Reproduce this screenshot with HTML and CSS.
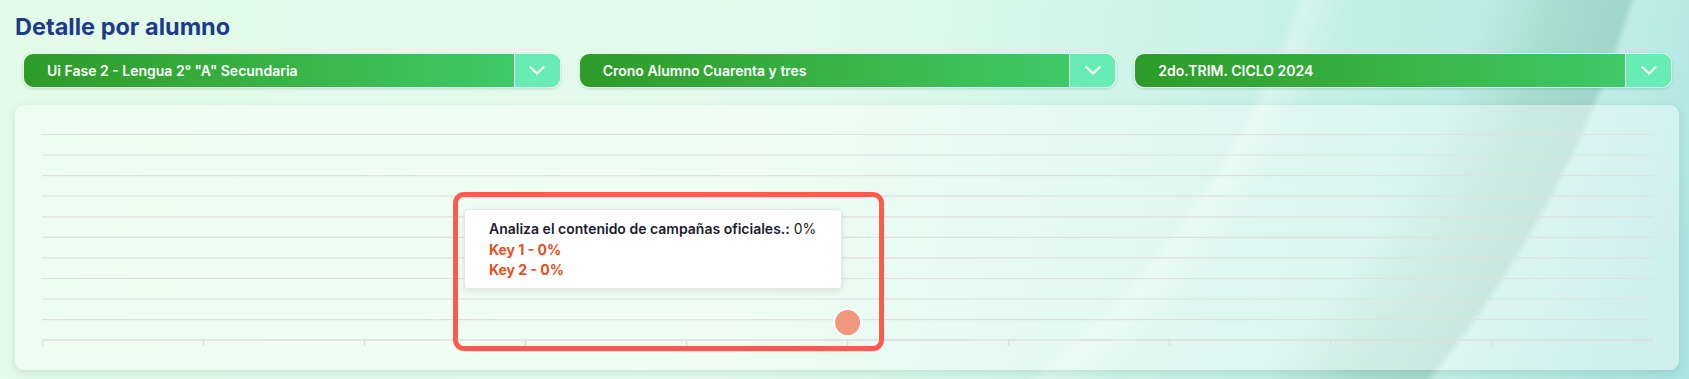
FILE: index.html
```html
<!DOCTYPE html>
<html lang="es">

<head>
  <meta charset="UTF-8">
  <meta name="viewport" content="width=device-width, initial-scale=1.0">
  <title>Detalle por alumno</title>

  <!-- styles -->
  <link rel="stylesheet" href="styles.css">
</head>

<body>
  <div class="page">
    <h1 class="title">Detalle por alumno</h1>

    <div class="filters">
      <div class="select">
        <span class="select-label">Ui Fase 2 - Lengua 2° "A" Secundaria</span>
        <span class="select-arrow">
          <svg width="16" height="9" viewBox="0 0 16 9"><path d="M1.5 1.2 L8 7.5 L14.5 1.2" /></svg>
        </span>
      </div>
      <div class="select">
        <span class="select-label">Crono Alumno Cuarenta y tres</span>
        <span class="select-arrow">
          <svg width="16" height="9" viewBox="0 0 16 9"><path d="M1.5 1.2 L8 7.5 L14.5 1.2" /></svg>
        </span>
      </div>
      <div class="select">
        <span class="select-label">2do.TRIM. CICLO 2024</span>
        <span class="select-arrow">
          <svg width="16" height="9" viewBox="0 0 16 9"><path d="M1.5 1.2 L8 7.5 L14.5 1.2" /></svg>
        </span>
      </div>
    </div>

    <section class="chart-card">
      <svg class="chart" width="1611" height="214" viewBox="0 0 1611 214">
        <g class="grid">
          <line x1="0" x2="1611" y1="0.5" y2="0.5" />
          <line x1="0" x2="1611" y1="21" y2="21" />
          <line x1="0" x2="1611" y1="41.6" y2="41.6" />
          <line x1="0" x2="1611" y1="62.2" y2="62.2" />
          <line x1="0" x2="1611" y1="82.8" y2="82.8" />
          <line x1="0" x2="1611" y1="103.3" y2="103.3" />
          <line x1="0" x2="1611" y1="123.9" y2="123.9" />
          <line x1="0" x2="1611" y1="144.5" y2="144.5" />
          <line x1="0" x2="1611" y1="165" y2="165" />
          <line x1="0" x2="1611" y1="185.6" y2="185.6" />
        </g>
        <g class="axis">
          <line x1="0" x2="1611" y1="206" y2="206" />
          <line x1="0.5" x2="0.5" y1="206" y2="212" />
          <line x1="161.5" x2="161.5" y1="206" y2="212" />
          <line x1="322.5" x2="322.5" y1="206" y2="212" />
          <line x1="483.5" x2="483.5" y1="206" y2="212" />
          <line x1="644.5" x2="644.5" y1="206" y2="212" />
          <line x1="805.5" x2="805.5" y1="206" y2="212" />
          <line x1="966.5" x2="966.5" y1="206" y2="212" />
          <line x1="1127.5" x2="1127.5" y1="206" y2="212" />
          <line x1="1288.5" x2="1288.5" y1="206" y2="212" />
          <line x1="1449.5" x2="1449.5" y1="206" y2="212" />
          <line x1="1610.5" x2="1610.5" y1="206" y2="212" />
        </g>
        <circle class="point" cx="805.6" cy="188.6" r="13.5" />
      </svg>

      <div class="focus-box"></div>

      <div class="tooltip">
        <p><strong>Analiza el contenido de campañas oficiales.:</strong> 0%</p>
        <p class="key">Key 1 - 0%</p>
        <p class="key">Key 2 - 0%</p>
      </div>
    </section>
  </div>
</body>

</html>
```

FILE: styles.css
```css
* {
  margin: 0;
  padding: 0;
  box-sizing: border-box;
  font-family: "Inter", "Noto Sans", sans-serif;
}

body {
  min-height: 100vh;
  overflow: hidden;
  background-color: #e2fbe8;
  background-image:
    radial-gradient(circle at 520px -265px, transparent 818px, rgba(255, 255, 255, 0.3) 830px, rgba(255, 255, 255, 0) 870px),
    radial-gradient(circle at 560px -330px, transparent 990px, rgba(90, 150, 120, 0.17) 1060px, rgba(90, 150, 120, 0.22) 1118px, rgba(255, 255, 255, 0.14) 1126px, rgba(255, 255, 255, 0.04) 1200px, rgba(120, 200, 200, 0.08) 1260px),
    linear-gradient(100deg, #e2fce8 0%, #e3fbee 45%, #c8f2e6 72%, #b6ebe0 88%, #b0e6e4 100%);
}

.page {
  padding: 12px 10px 0 15px;
}

.title {
  font-size: 23.5px;
  line-height: 29px;
  font-weight: 700;
  color: #1e3b8b;
}

.filters {
  display: flex;
  gap: 18px;
  margin-top: 12px;
  padding: 0 7px 0 8px;
}

.select {
  flex: 1;
  display: flex;
  height: 35px;
  border: 1px solid rgba(255, 255, 255, 0.95);
  border-radius: 10px;
  overflow: hidden;
  background: linear-gradient(90deg, #2d9b27 0%, #37b244 45%, #40cb6a 95%);
  box-shadow: 0 1px 3px rgba(0, 0, 0, 0.15);
}

.select-label {
  flex: 1;
  display: flex;
  align-items: center;
  padding-left: 23px;
  color: #fff;
  font-size: 14px;
  font-weight: 600;
  white-space: nowrap;
}

.select-arrow {
  width: 46px;
  display: flex;
  align-items: center;
  justify-content: center;
  border-left: 1px solid #fff;
  background-color: #67edb3;
}

.select-arrow path {
  fill: none;
  stroke: #fff;
  stroke-width: 2.2;
  stroke-linecap: round;
  stroke-linejoin: round;
}

.chart-card {
  position: relative;
  height: 265px;
  margin-top: 17px;
  padding: 29px 25px 0 27px;
  border-radius: 9px;
  background-color: rgba(255, 255, 255, 0.42);
  box-shadow: 0 3px 8px rgba(40, 80, 70, 0.14);
}

.chart {
  display: block;
}

.chart .grid line {
  stroke: #dfe1df;
  stroke-width: 1.2;
}

.chart .axis line {
  stroke: #dddedd;
  stroke-width: 1.6;
}

.chart .point {
  fill: #f0977e;
  stroke: #fff;
  stroke-width: 2;
}

.focus-box {
  position: absolute;
  left: 438px;
  top: 87px;
  width: 431px;
  height: 159px;
  border: 5px solid #fe5b4c;
  border-radius: 11px;
}

.tooltip {
  position: absolute;
  left: 449px;
  top: 104px;
  width: 378px;
  height: 80px;
  padding: 9px 24px;
  background-color: #fff;
  border: 1px solid #e8e8e8;
  border-radius: 4px;
  box-shadow: 0 2px 6px rgba(0, 0, 0, 0.1);
  font-size: 14px;
  line-height: 20.7px;
  color: #222;
}

.tooltip strong {
  font-weight: 600;
  color: #1b1d2e;
}

.tooltip .key {
  font-weight: 700;
  color: #e2501b;
}
```
